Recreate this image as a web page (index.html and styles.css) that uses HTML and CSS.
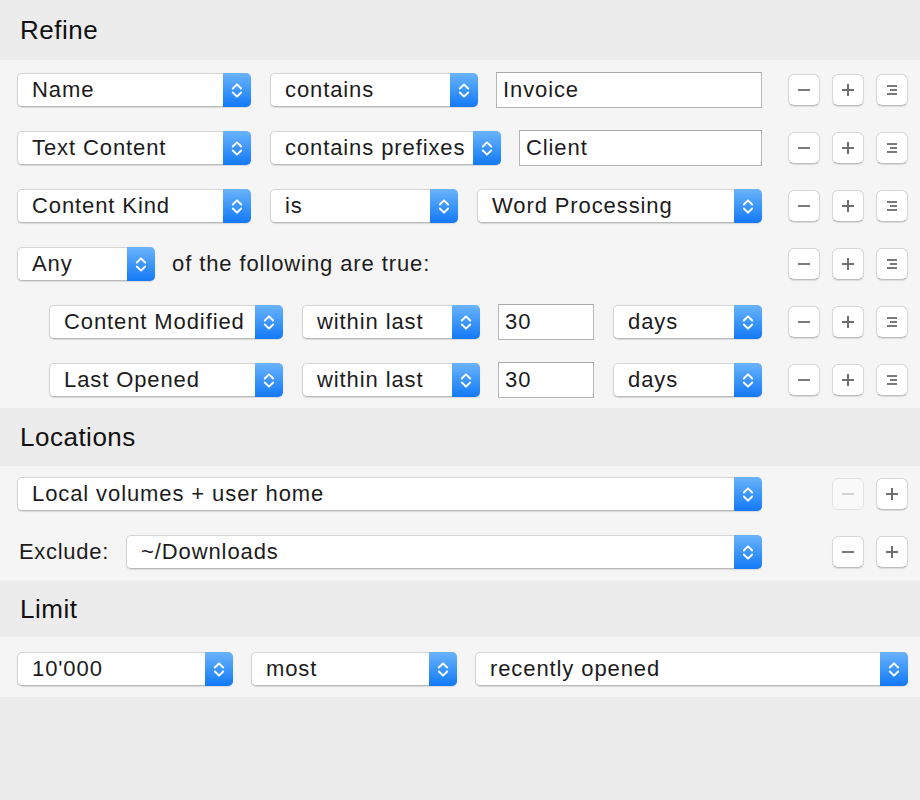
FILE: index.html
```html
<!DOCTYPE html>
<html>
<head>
<meta charset="utf-8">
<link rel="stylesheet" href="styles.css">
</head>
<body>
<div class="panel">
  <div class="head head-refine">Refine</div>
  <div class="body body-refine">
    <div class="row">
      <div class="controls">
        <div class="popup w234"><span class="label">Name</span><span class="step"><svg width="12" height="19" viewBox="0 0 12 19"><path d="M1.8 7.5 L6 3.3 L10.2 7.5 M1.8 11.5 L6 15.7 L10.2 11.5" fill="none" stroke="#fff" stroke-width="1.9" stroke-linecap="round" stroke-linejoin="round"/></svg></span></div>
        <div class="popup w208"><span class="label">contains</span><span class="step"><svg width="12" height="19" viewBox="0 0 12 19"><path d="M1.8 7.5 L6 3.3 L10.2 7.5 M1.8 11.5 L6 15.7 L10.2 11.5" fill="none" stroke="#fff" stroke-width="1.9" stroke-linecap="round" stroke-linejoin="round"/></svg></span></div>
        <div class="field grow">Invoice</div>
      </div>
      <div class="btns">
        <span class="btn"><span class="minus"></span></span>
        <span class="btn"><span class="plus"></span></span>
        <span class="btn"><span class="menu"><i class="l1"></i><i class="l2"></i><i class="l3"></i></span></span>
      </div>
    </div>
    <div class="row">
      <div class="controls">
        <div class="popup w234"><span class="label">Text Content</span><span class="step"><svg width="12" height="19" viewBox="0 0 12 19"><path d="M1.8 7.5 L6 3.3 L10.2 7.5 M1.8 11.5 L6 15.7 L10.2 11.5" fill="none" stroke="#fff" stroke-width="1.9" stroke-linecap="round" stroke-linejoin="round"/></svg></span></div>
        <div class="popup w231"><span class="label">contains prefixes</span><span class="step"><svg width="12" height="19" viewBox="0 0 12 19"><path d="M1.8 7.5 L6 3.3 L10.2 7.5 M1.8 11.5 L6 15.7 L10.2 11.5" fill="none" stroke="#fff" stroke-width="1.9" stroke-linecap="round" stroke-linejoin="round"/></svg></span></div>
        <div class="field grow">Client</div>
      </div>
      <div class="btns">
        <span class="btn"><span class="minus"></span></span>
        <span class="btn"><span class="plus"></span></span>
        <span class="btn"><span class="menu"><i class="l1"></i><i class="l2"></i><i class="l3"></i></span></span>
      </div>
    </div>
    <div class="row">
      <div class="controls">
        <div class="popup w234"><span class="label">Content Kind</span><span class="step"><svg width="12" height="19" viewBox="0 0 12 19"><path d="M1.8 7.5 L6 3.3 L10.2 7.5 M1.8 11.5 L6 15.7 L10.2 11.5" fill="none" stroke="#fff" stroke-width="1.9" stroke-linecap="round" stroke-linejoin="round"/></svg></span></div>
        <div class="popup w188"><span class="label">is</span><span class="step"><svg width="12" height="19" viewBox="0 0 12 19"><path d="M1.8 7.5 L6 3.3 L10.2 7.5 M1.8 11.5 L6 15.7 L10.2 11.5" fill="none" stroke="#fff" stroke-width="1.9" stroke-linecap="round" stroke-linejoin="round"/></svg></span></div>
        <div class="popup grow"><span class="label">Word Processing</span><span class="step"><svg width="12" height="19" viewBox="0 0 12 19"><path d="M1.8 7.5 L6 3.3 L10.2 7.5 M1.8 11.5 L6 15.7 L10.2 11.5" fill="none" stroke="#fff" stroke-width="1.9" stroke-linecap="round" stroke-linejoin="round"/></svg></span></div>
      </div>
      <div class="btns">
        <span class="btn"><span class="minus"></span></span>
        <span class="btn"><span class="plus"></span></span>
        <span class="btn"><span class="menu"><i class="l1"></i><i class="l2"></i><i class="l3"></i></span></span>
      </div>
    </div>
    <div class="row">
      <div class="controls">
        <div class="popup w138"><span class="label">Any</span><span class="step"><svg width="12" height="19" viewBox="0 0 12 19"><path d="M1.8 7.5 L6 3.3 L10.2 7.5 M1.8 11.5 L6 15.7 L10.2 11.5" fill="none" stroke="#fff" stroke-width="1.9" stroke-linecap="round" stroke-linejoin="round"/></svg></span></div>
        <span class="text">of the following are true:</span>
      </div>
      <div class="btns">
        <span class="btn"><span class="minus"></span></span>
        <span class="btn"><span class="plus"></span></span>
        <span class="btn"><span class="menu"><i class="l1"></i><i class="l2"></i><i class="l3"></i></span></span>
      </div>
    </div>
    <div class="row nested">
      <div class="controls">
        <div class="popup w234"><span class="label">Content Modified</span><span class="step"><svg width="12" height="19" viewBox="0 0 12 19"><path d="M1.8 7.5 L6 3.3 L10.2 7.5 M1.8 11.5 L6 15.7 L10.2 11.5" fill="none" stroke="#fff" stroke-width="1.9" stroke-linecap="round" stroke-linejoin="round"/></svg></span></div>
        <div class="popup w178"><span class="label">within last</span><span class="step"><svg width="12" height="19" viewBox="0 0 12 19"><path d="M1.8 7.5 L6 3.3 L10.2 7.5 M1.8 11.5 L6 15.7 L10.2 11.5" fill="none" stroke="#fff" stroke-width="1.9" stroke-linecap="round" stroke-linejoin="round"/></svg></span></div>
        <div class="field w96">30</div>
        <div class="popup grow"><span class="label">days</span><span class="step"><svg width="12" height="19" viewBox="0 0 12 19"><path d="M1.8 7.5 L6 3.3 L10.2 7.5 M1.8 11.5 L6 15.7 L10.2 11.5" fill="none" stroke="#fff" stroke-width="1.9" stroke-linecap="round" stroke-linejoin="round"/></svg></span></div>
      </div>
      <div class="btns">
        <span class="btn"><span class="minus"></span></span>
        <span class="btn"><span class="plus"></span></span>
        <span class="btn"><span class="menu"><i class="l1"></i><i class="l2"></i><i class="l3"></i></span></span>
      </div>
    </div>
    <div class="row nested">
      <div class="controls">
        <div class="popup w234"><span class="label">Last Opened</span><span class="step"><svg width="12" height="19" viewBox="0 0 12 19"><path d="M1.8 7.5 L6 3.3 L10.2 7.5 M1.8 11.5 L6 15.7 L10.2 11.5" fill="none" stroke="#fff" stroke-width="1.9" stroke-linecap="round" stroke-linejoin="round"/></svg></span></div>
        <div class="popup w178"><span class="label">within last</span><span class="step"><svg width="12" height="19" viewBox="0 0 12 19"><path d="M1.8 7.5 L6 3.3 L10.2 7.5 M1.8 11.5 L6 15.7 L10.2 11.5" fill="none" stroke="#fff" stroke-width="1.9" stroke-linecap="round" stroke-linejoin="round"/></svg></span></div>
        <div class="field w96">30</div>
        <div class="popup grow"><span class="label">days</span><span class="step"><svg width="12" height="19" viewBox="0 0 12 19"><path d="M1.8 7.5 L6 3.3 L10.2 7.5 M1.8 11.5 L6 15.7 L10.2 11.5" fill="none" stroke="#fff" stroke-width="1.9" stroke-linecap="round" stroke-linejoin="round"/></svg></span></div>
      </div>
      <div class="btns">
        <span class="btn"><span class="minus"></span></span>
        <span class="btn"><span class="plus"></span></span>
        <span class="btn"><span class="menu"><i class="l1"></i><i class="l2"></i><i class="l3"></i></span></span>
      </div>
    </div>
  </div>

  <div class="head head-loc">Locations</div>
  <div class="body body-loc">
    <div class="row">
      <div class="controls">
        <div class="popup grow"><span class="label">Local volumes + user home</span><span class="step"><svg width="12" height="19" viewBox="0 0 12 19"><path d="M1.8 7.5 L6 3.3 L10.2 7.5 M1.8 11.5 L6 15.7 L10.2 11.5" fill="none" stroke="#fff" stroke-width="1.9" stroke-linecap="round" stroke-linejoin="round"/></svg></span></div>
      </div>
      <div class="btns">
        <span class="btn disabled"><span class="minus"></span></span>
        <span class="btn"><span class="plus"></span></span>
      </div>
    </div>
    <div class="row">
      <div class="controls">
        <span class="text exclude">Exclude:</span>
        <div class="popup grow"><span class="label">~/Downloads</span><span class="step"><svg width="12" height="19" viewBox="0 0 12 19"><path d="M1.8 7.5 L6 3.3 L10.2 7.5 M1.8 11.5 L6 15.7 L10.2 11.5" fill="none" stroke="#fff" stroke-width="1.9" stroke-linecap="round" stroke-linejoin="round"/></svg></span></div>
      </div>
      <div class="btns">
        <span class="btn"><span class="minus"></span></span>
        <span class="btn"><span class="plus"></span></span>
      </div>
    </div>
  </div>

  <div class="head head-limit">Limit</div>
  <div class="body body-limit">
    <div class="row">
      <div class="controls tight">
        <div class="popup w216"><span class="label">10'000</span><span class="step"><svg width="12" height="19" viewBox="0 0 12 19"><path d="M1.8 7.5 L6 3.3 L10.2 7.5 M1.8 11.5 L6 15.7 L10.2 11.5" fill="none" stroke="#fff" stroke-width="1.9" stroke-linecap="round" stroke-linejoin="round"/></svg></span></div>
        <div class="popup w206"><span class="label">most</span><span class="step"><svg width="12" height="19" viewBox="0 0 12 19"><path d="M1.8 7.5 L6 3.3 L10.2 7.5 M1.8 11.5 L6 15.7 L10.2 11.5" fill="none" stroke="#fff" stroke-width="1.9" stroke-linecap="round" stroke-linejoin="round"/></svg></span></div>
        <div class="popup grow"><span class="label">recently opened</span><span class="step"><svg width="12" height="19" viewBox="0 0 12 19"><path d="M1.8 7.5 L6 3.3 L10.2 7.5 M1.8 11.5 L6 15.7 L10.2 11.5" fill="none" stroke="#fff" stroke-width="1.9" stroke-linecap="round" stroke-linejoin="round"/></svg></span></div>
      </div>
    </div>
  </div>
</div>
</body>
</html>
```

FILE: styles.css
```css
html, body {
  margin: 0;
  padding: 0;
  background: #ececec;
}
body {
  width: 920px;
  height: 800px;
  font-family: "Liberation Sans", Arial, Helvetica, sans-serif;
  color: #1c1c1c;
}
.panel {
  display: flex;
  flex-direction: column;
}
.head {
  display: flex;
  align-items: center;
  padding-left: 20px;
  font-size: 26px;
  letter-spacing: 0.5px;
  color: #111;
  background: #ececec;
}
.head-refine { height: 60px; }
.head-loc { height: 58px; }
.head-limit { height: 56px; }
.body {
  background: #f5f5f5;
  display: flex;
  flex-direction: column;
  gap: 22px;
  padding-left: 17px;
  padding-right: 12px;
}
.body-refine { padding-top: 12px; padding-bottom: 10px; }
.body-loc { padding-top: 10px; padding-bottom: 11px; }
.body-limit { padding-top: 14px; padding-bottom: 10px; }
.row {
  display: flex;
  align-items: center;
  height: 36px;
}
.row.nested { padding-left: 32px; }
.controls {
  flex: 1;
  display: flex;
  align-items: center;
  gap: 19px;
  min-width: 0;
}
.controls.tight { gap: 18px; }
.btns {
  width: 120px;
  margin-left: 26px;
  display: flex;
  justify-content: flex-end;
  gap: 12px;
}
.popup {
  box-sizing: border-box;
  height: 34px;
  display: flex;
  align-items: stretch;
  background: #fff;
  border: 1px solid #d4d4d4;
  border-bottom-color: #b9b9b9;
  border-radius: 5px;
  box-shadow: 0 1px 1px rgba(0,0,0,0.12);
  font-size: 22px;
  letter-spacing: 0.9px;
  color: #1c1c1c;
}
.popup .label {
  flex: 1;
  display: flex;
  align-items: center;
  padding-left: 14px;
  white-space: nowrap;
  overflow: hidden;
}
.popup .step {
  width: 28px;
  margin: -1px -1px -1px 0;
  border-radius: 0 5px 5px 0;
  background: linear-gradient(#6bb3fb, #3d97fa 50%, #1479f6);
  display: flex;
  align-items: center;
  justify-content: center;
}
.field {
  box-sizing: border-box;
  height: 36px;
  background: #fff;
  border: 1px solid #b5b5b5;
  border-top-color: #a9a9a9;
  display: flex;
  align-items: center;
  padding-left: 6px;
  font-size: 22px;
  letter-spacing: 0.9px;
  color: #1c1c1c;
  margin-left: -1px;
}
.grow { flex: 1; min-width: 0; }
.w234 { width: 234px; }
.w208 { width: 208px; }
.w231 { width: 231px; }
.w188 { width: 188px; }
.w178 { width: 178px; }
.w138 { width: 138px; }
.w96 { width: 96px; }
.w216 { width: 216px; }
.w206 { width: 206px; }
.text {
  font-size: 22px;
  letter-spacing: 0.9px;
  color: #1c1c1c;
  white-space: nowrap;
}
.controls .text { margin-left: -2px; }
.controls .exclude { margin-left: 2px; margin-right: -2px; letter-spacing: 0.7px; }
.btn {
  box-sizing: border-box;
  width: 32px;
  height: 32px;
  background: #fff;
  border: 1px solid #d6d6d6;
  border-bottom-color: #bdbdbd;
  border-radius: 6px;
  box-shadow: 0 1px 1px rgba(0,0,0,0.10);
  display: flex;
  align-items: center;
  justify-content: center;
  position: relative;
}
.btn.disabled {
  background: #f9f9f9;
  border-color: #e2e2e2;
  box-shadow: none;
}
.minus {
  width: 12px;
  height: 2px;
  background: #7a7a7a;
}
.btn.disabled .minus { background: #d2d2d2; }
.plus {
  width: 12px;
  height: 12px;
  position: relative;
}
.plus::before, .plus::after {
  content: "";
  position: absolute;
  background: #6e6e6e;
}
.plus::before { left: 0; top: 5px; width: 12px; height: 2px; }
.plus::after { left: 5px; top: 0; width: 2px; height: 12px; }
.menu {
  width: 10px;
  height: 10px;
  display: flex;
  flex-direction: column;
  justify-content: space-between;
  align-items: flex-end;
}
.menu i {
  display: block;
  height: 2px;
  background: #7a7a7a;
}
.menu .l1 { width: 10px; }
.menu .l2 { width: 7px; }
.menu .l3 { width: 10px; }
```
